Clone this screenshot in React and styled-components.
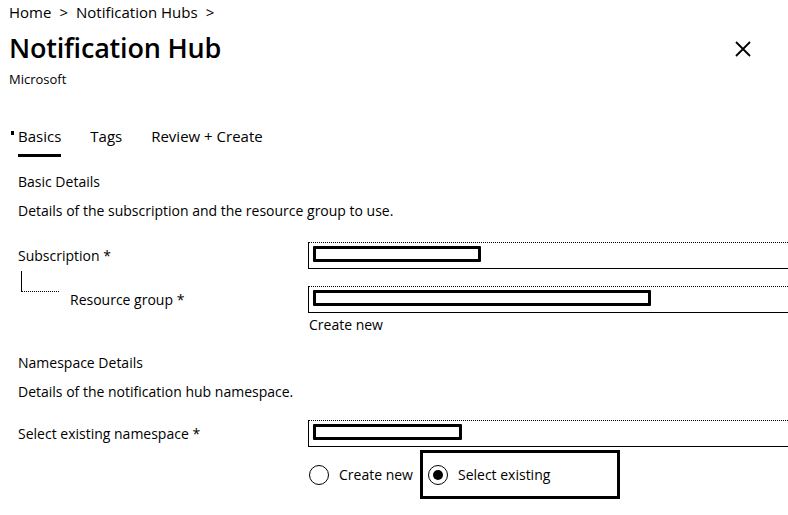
import styled, { createGlobalStyle } from "styled-components";

const GlobalStyle = createGlobalStyle`
  html, body {
    margin: 0;
    padding: 0;
    background: #fff;
  }
  body {
    font-family: "Open Sans", "Noto Sans", sans-serif;
    color: #000;
    overflow: hidden;
  }
`;

const Redact = ({ width }) => <Mask style={{ width }} />;

const Radio = ({ checked, label }) => (
  <RadioItem>
    <Circle>{checked && <Dot />}</Circle>
    <span>{label}</span>
  </RadioItem>
);

const App = () => {
  return (
    <Page>
      <GlobalStyle />
      <Header>
        <Breadcrumb>
          <span>Home</span>
          <Chevron>&gt;</Chevron>
          <span>Notification Hubs</span>
          <Chevron>&gt;</Chevron>
        </Breadcrumb>
        <TitleRow>
          <Title>Notification Hub</Title>
          <Close aria-label="close">
            <svg width="16" height="16" viewBox="0 0 16 16">
              <path d="M1 1 L15 15 M15 1 L1 15" stroke="#000" strokeWidth="1.8" />
            </svg>
          </Close>
        </TitleRow>
        <Publisher>Microsoft</Publisher>
      </Header>

      <Tabs>
        <Tab $active>
          <Marker />
          Basics
        </Tab>
        <Tab>Tags</Tab>
        <Tab>Review + Create</Tab>
      </Tabs>

      <Form>
        <SectionTitle>Basic Details</SectionTitle>
        <SectionText>Details of the subscription and the resource group to use.</SectionText>

        <Row>
          <Label>Subscription *</Label>
          <Field>
            <Redact width="168px" />
          </Field>
        </Row>
        <Row $gap="17px">
          <Label $nested>
            <Tree />
            Resource group *
          </Label>
          <FieldCol>
            <Field>
              <Redact width="338px" />
            </Field>
            <LinkText>Create new</LinkText>
          </FieldCol>
        </Row>

        <SectionTitle $top="19px">Namespace Details</SectionTitle>
        <SectionText $bottom="19px">Details of the notification hub namespace.</SectionText>

        <Row>
          <Label>Select existing namespace *</Label>
          <FieldCol>
            <Field>
              <Redact width="149px" />
            </Field>
            <RadioRow>
              <Radio label="Create new" />
              <Selected>
                <Radio checked label="Select existing" />
              </Selected>
            </RadioRow>
          </FieldCol>
        </Row>
      </Form>
    </Page>
  );
};

export default App;

const Page = styled.div`
  width: 788px;
  height: 515px;
  overflow: hidden;
`;

const Header = styled.div`
  padding: 2px 0 0 9px;
`;

const Breadcrumb = styled.div`
  display: flex;
  align-items: center;
  gap: 8px;
  font-size: 15px;
  line-height: 20px;
`;

const Chevron = styled.span`
  font-size: 15px;
`;

const TitleRow = styled.div`
  display: flex;
  justify-content: space-between;
  align-items: center;
  padding-right: 37px;
  margin-top: 8px;
`;

const Title = styled.h1`
  margin: 0;
  font-size: 27px;
  font-weight: 600;
  line-height: 36px;
  letter-spacing: -0.2px;
`;

const Close = styled.div`
  display: flex;
  align-items: center;
  margin-top: 2px;
`;

const Publisher = styled.div`
  font-size: 13px;
  line-height: 16px;
  margin-top: 5px;
`;

const Tabs = styled.div`
  display: flex;
  gap: 29px;
  padding-left: 9px;
  margin-top: 39px;
`;

const Tab = styled.div`
  position: relative;
  font-size: 15px;
  line-height: 20px;
  padding-bottom: 8px;
  padding-left: ${({ $active }) => ($active ? "9px" : "0")};
  border-bottom: 3px solid transparent;
  ${({ $active }) =>
    $active &&
    `
    &::after {
      content: "";
      position: absolute;
      left: 9px;
      right: 0;
      bottom: -3px;
      height: 3px;
      background: #000;
    }
  `}
`;

const Marker = styled.span`
  position: absolute;
  left: 2px;
  top: 5px;
  width: 3px;
  height: 4px;
  background: #000;
`;

const Form = styled.div`
  padding-left: 18px;
  margin-top: 15px;
`;

const SectionTitle = styled.div`
  font-size: 14px;
  line-height: 20px;
  margin-top: ${({ $top }) => $top || "0"};
`;

const SectionText = styled.div`
  font-size: 14px;
  line-height: 18px;
  margin-top: 10px;
  margin-bottom: ${({ $bottom }) => $bottom || "22px"};
`;

const Row = styled.div`
  display: grid;
  grid-template-columns: 290px 1fr;
  margin-top: ${({ $gap }) => $gap || "0"};
`;

const Label = styled.div`
  position: relative;
  font-size: 14px;
  line-height: 27px;
  padding-left: ${({ $nested }) => ($nested ? "52px" : "0")};
`;

const Tree = styled.span`
  position: absolute;
  left: 3px;
  top: -15px;
  width: 37px;
  height: 20px;
  border-left: 1px solid #000;
  border-bottom: 1px dotted #000;
`;

const FieldCol = styled.div`
  display: flex;
  flex-direction: column;
`;

const Field = styled.div`
  height: 27px;
  box-sizing: border-box;
  border: 1px solid #000;
  border-top-style: dotted;
  border-right: none;
  padding: 3px 4px;
  display: flex;
  align-items: flex-start;
`;

const Mask = styled.div`
  height: 16px;
  box-sizing: border-box;
  border: 3px solid #000;
  border-radius: 1px;
  background: #fff;
`;

const LinkText = styled.div`
  font-size: 14px;
  line-height: 18px;
  margin-top: 3px;
  padding-left: 1px;
`;

const RadioRow = styled.div`
  display: flex;
  align-items: center;
  margin-top: 3px;
`;

const RadioItem = styled.div`
  display: flex;
  align-items: center;
  gap: 10px;
  font-size: 14px;
  padding-left: 1px;
  margin-right: 7px;
`;

const Circle = styled.span`
  width: 20px;
  height: 20px;
  box-sizing: border-box;
  border: 1.5px solid #000;
  border-radius: 50%;
  display: flex;
  align-items: center;
  justify-content: center;
`;

const Dot = styled.span`
  width: 10px;
  height: 10px;
  border-radius: 50%;
  background: #000;
`;

const Selected = styled.div`
  width: 200px;
  height: 49px;
  box-sizing: border-box;
  border: 3px solid #000;
  display: flex;
  align-items: center;
  padding-left: 4px;
`;
